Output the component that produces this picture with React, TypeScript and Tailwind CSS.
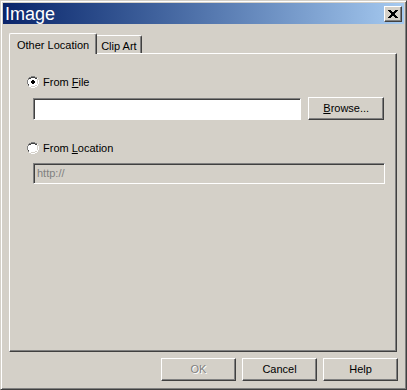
import React from 'react';

const font = { fontFamily: '"Liberation Sans", Arial, sans-serif' };

function Radio({ checked }: { checked?: boolean }) {
  return (
    <svg width="12" height="12" viewBox="0 0 12 12" className="shrink-0">
      <path d="M4 0h4v1h2v1h1v2h1v4h-1v2h-1v1h-2v1h-4v-1h-2v-1h-1v-2h-1v-4h1v-2h1v-1h2z" fill="#ffffff" />
      <path d="M4 0h4v1h2v1h-2v-1h-4v1h-2v2h-1v4h1v2h-1v-2h-1v-4h1v-2h1v-1h2z" fill="#808080" />
      <path d="M4 1h4v1h2v1h-2v-1h-4v1h-2v1h-1v4h1v1h-1v-1 -4h1v-2h2z" fill="#404040" />
      <path d="M10 3h1v1 4h-1v2h-2v1h-4v-1h4v-1h2v-2z" fill="#d4d0c8" />
      {checked && <path d="M5 4h2v1h1v2h-1v1h-2v-1h-1v-2h1z" fill="#000000" />}
    </svg>
  );
}

// rows of the close glyph, [start, end) pairs
const xRows = [
  [0, 3, 7, 10],
  [1, 4, 6, 9],
  [2, 8],
  [3, 7],
  [3, 7],
  [2, 8],
  [1, 4, 6, 9],
  [0, 3, 7, 10],
];

function CloseGlyph() {
  return (
    <svg width="10" height="8" viewBox="0 0 10 8" shapeRendering="crispEdges">
      {xRows.map((r, y) => {
        const rects = [];
        for (let i = 0; i < r.length; i += 2) {
          rects.push(<rect key={`${y}-${i}`} x={r[i]} y={y} width={r[i + 1] - r[i]} height={1} fill="#000" />);
        }
        return rects;
      })}
    </svg>
  );
}

function Button({ children, disabled, className = '' }: { children: React.ReactNode; disabled?: boolean; className?: string }) {
  return (
    <button
      className={`h-[23px] border border-t-white border-l-white border-r-[#404040] border-b-[#404040] bg-[#d4d0c8] text-[11px] shadow-[inset_-1px_-1px_#808080] ${disabled ? 'text-[#808080] [text-shadow:1px_1px_#ffffff]' : 'text-black'} ${className}`}
    >
      {children}
    </button>
  );
}

export default function App() {
  return (
    <div
      style={font}
      className="w-[407px] h-[390px] bg-[#d4d0c8] border border-t-[#d4d0c8] border-l-[#d4d0c8] border-r-[#404040] border-b-[#404040] shadow-[inset_1px_1px_#ffffff,inset_-1px_-1px_#808080] p-[2px] flex flex-col select-none"
    >
      {/* Title bar */}
      <div className="h-[21px] bg-gradient-to-r from-[#0a246a] to-[#a6caf0] flex items-center justify-between pl-[2px] pr-[2px]">
        <span className="text-white text-[18px] leading-none">Image</span>
        <div className="w-[18px] h-[16px] bg-[#d4d0c8] border border-t-white border-l-white border-r-[#404040] border-b-[#404040] shadow-[inset_-1px_-1px_#808080] flex items-center justify-center">
          <CloseGlyph />
        </div>
      </div>

      {/* Tabs */}
      <div className="flex items-end mt-[8px] ml-[6px] mr-[7px] relative z-10 h-[21px]">
        <div className="h-[21px] -mb-px bg-[#d4d0c8] border-t border-l border-r border-t-white border-l-white border-r-[#404040] rounded-tl-[2px] rounded-tr-[2px] shadow-[inset_-1px_0_#808080] px-[7px] pt-[3px] text-[11px] text-black">
          Other Location
        </div>
        <div className="h-[18px] bg-[#d4d0c8] border-t border-r border-t-white border-r-[#404040] rounded-tr-[2px] shadow-[inset_-1px_0_#808080] px-[4px] pt-[2px] text-[11px] text-black">
          Clip Art
        </div>
      </div>

      {/* Panel */}
      <div className="h-[299px] ml-[6px] mr-[7px] border border-t-white border-l-white border-r-[#404040] border-b-[#404040] shadow-[inset_-1px_-1px_#808080] pl-[17px] pr-[12px] pt-[22px] flex flex-col text-[11px] text-black">
        <div className="flex items-center gap-[4px] h-[12px]">
          <Radio checked />
          <span>From <u>F</u>ile</span>
        </div>
        <div className="flex items-center gap-[7px] mt-[9px] ml-[6px]">
          <div className="w-[270px] h-[22px] bg-white border border-t-[#808080] border-l-[#808080] border-r-white border-b-white shadow-[inset_1px_1px_#404040]" />
          <Button className="w-[76px] h-[22px]"><u>B</u>rowse...</Button>
        </div>
        <div className="flex items-center gap-[4px] h-[12px] mt-[22px]">
          <Radio />
          <span>From <u>L</u>ocation</span>
        </div>
        <div className="mt-[9px] ml-[6px] w-[352px] h-[21px] bg-[#d4d0c8] border border-t-[#808080] border-l-[#808080] border-r-white border-b-white shadow-[inset_1px_1px_#404040] flex items-center pl-[3px] text-[#808080]">
          http://
        </div>
      </div>

      {/* Buttons */}
      <div className="flex justify-end gap-[6px] mt-[6px] mr-[6px]">
        <Button disabled className="w-[75px]">OK</Button>
        <Button className="w-[75px]">Cancel</Button>
        <Button className="w-[75px]">Help</Button>
      </div>
    </div>
  );
}
